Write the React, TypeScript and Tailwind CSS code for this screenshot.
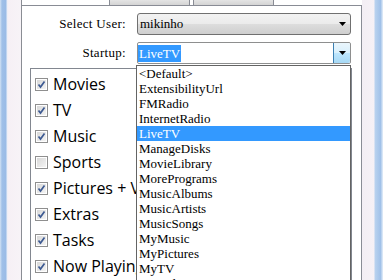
import React from "react";

const startupItems = [
  "<Default>",
  "ExtensibilityUrl",
  "FMRadio",
  "InternetRadio",
  "LiveTV",
  "ManageDisks",
  "MovieLibrary",
  "MorePrograms",
  "MusicAlbums",
  "MusicArtists",
  "MusicSongs",
  "MyMusic",
  "MyPictures",
  "MyTV",
  "MyVideos",
];

const menuItems = [
  { label: "Movies", checked: true },
  { label: "TV", checked: true },
  { label: "Music", checked: true },
  { label: "Sports", checked: false },
  { label: "Pictures + Videos", checked: true },
  { label: "Extras", checked: true },
  { label: "Tasks", checked: true },
  { label: "Now Playing", checked: true },
];

function Arrow() {
  return (
    <svg width="7" height="4" viewBox="0 0 7 4">
      <path d="M0 0h7L3.5 4z" fill="#000" />
    </svg>
  );
}

function Check({ checked }: { checked: boolean }) {
  return (
    <div className="w-[13px] h-[13px] shrink-0 border border-[#8f8f8f] bg-white p-[1px]">
      <div className="w-full h-full bg-[linear-gradient(135deg,#d8d8d8,#f4f4f4)] flex items-center justify-center">
        {checked && (
          <svg width="9" height="9" viewBox="0 0 9 9">
            <path d="M1.5 4.5l2 2.5 4-5.5" fill="none" stroke="#3d5a92" strokeWidth="1.7" />
          </svg>
        )}
      </div>
    </div>
  );
}

export default function App() {
  return (
    <div className="w-[383px] h-[280px] overflow-hidden flex bg-white font-['Liberation_Serif',serif] text-[13px] text-black">
      {/* window frame left */}
      <div className="w-[22px] shrink-0 border-r border-[#8a8d94] bg-[linear-gradient(to_right,#d2e2f4_0px,#a0c0e8_2px,#9abbe6_6px,#e7eef8_7px,#f6f0f5_8px,#f7f3f7_20px)]" />

      <div className="w-[340px] shrink-0 flex flex-col">
        {/* tabs */}
        <div className="h-[5px] shrink-0 flex pl-[87px] gap-[3px]">
          <div className="w-[81px] h-full border-x border-[#898c95] bg-[linear-gradient(#e4e4e4,#d4d4d4)]" />
          <div className="w-[81px] h-full border-x border-[#898c95] bg-[linear-gradient(#e4e4e4,#d4d4d4)]" />
        </div>

        <div className="flex-1 relative border-t border-r border-[#898c95] pt-[7px]">
          <div className="flex items-center h-[22px]">
            <div className="w-[104px] text-right tracking-[0.3px]">Select User:</div>
            <div className="ml-[11px] w-[214px] h-full rounded-[3px] border border-[#707070] bg-[linear-gradient(#f2f2f2,#ebebeb_50%,#dddddd_50%,#cfcfcf)] flex items-center pl-[2px] pr-[4px]">
              <span className="flex-1">mikinho</span>
              <Arrow />
            </div>
          </div>

          <div className="flex items-center h-[22px] mt-[7px]">
            <div className="w-[104px] text-right tracking-[0.3px]">Startup:</div>
            <div className="ml-[11px] w-[214px] h-full rounded-[2px] border border-[#8e8f8f] bg-white flex items-center">
              <span className="ml-[0px] h-[17px] leading-[17px] px-[1px] bg-[#3399ff] text-white">LiveTV</span>
              <div className="ml-auto w-[17px] h-full rounded-r-[2px] border-l border-[#3c7fb1] bg-[linear-gradient(#eaf6fd,#d9f0fc_50%,#bee6fd_50%,#a7d9f5)] flex items-center justify-center">
                <Arrow />
              </div>
            </div>
          </div>

          {/* menu strip list */}
          <div className="mt-[4px] ml-[8px] w-[322px] h-[230px] border border-[#828790] pt-[2px] font-['Open_Sans',sans-serif] text-[16px] overflow-hidden">
            {menuItems.map((m) => (
              <div key={m.label} className="h-[26px] flex items-center pl-[4px] gap-[5px] whitespace-nowrap">
                <Check checked={m.checked} />
                <span className="-mt-[1px]">{m.label}</span>
              </div>
            ))}
          </div>

          {/* open startup dropdown */}
          <div className="absolute left-[114px] top-[59px] w-[215px] h-[230px] bg-white border border-[#646464] overflow-hidden">
            {startupItems.map((it) => (
              <div
                key={it}
                className={`h-[15px] leading-[15px] pl-[2px] whitespace-nowrap ${
                  it === "LiveTV" ? "bg-[#3399ff] text-white" : ""
                }`}
              >
                {it}
              </div>
            ))}
          </div>
        </div>
      </div>

      {/* window frame right */}
      <div className="flex-1 bg-[linear-gradient(to_right,#f3eef4_0px,#f6f1f6_12px,#b9d2ef_13px,#9fc0e8_19px,#d8e6f6_20px)]" />
    </div>
  );
}
